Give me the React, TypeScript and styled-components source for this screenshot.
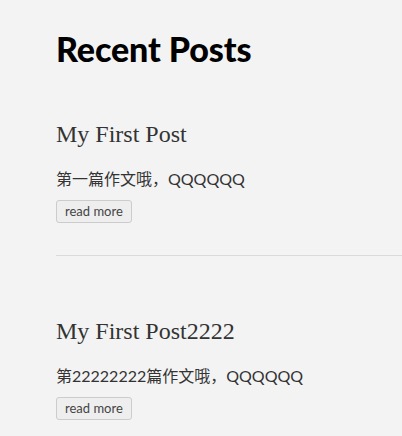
import React from "react";
import styled, { createGlobalStyle } from "styled-components";

const Global = createGlobalStyle`
  html, body { margin: 0; padding: 0; background: #f3f3f3; }
  body { font-family: Lato, "Noto Sans CJK SC", sans-serif; color: #222; }
`;

const Page = styled.main`
  padding: 26px 0 0 56px;
`;

const Heading = styled.h1`
  margin: 0 0 46px;
  font-family: Lato, sans-serif;
  font-weight: 900;
  font-size: 34px;
  line-height: 46px;
  color: #000;
  letter-spacing: -0.1px;
`;

const Post = styled.article<{ $last?: boolean }>`
  padding-bottom: ${(p) => (p.$last ? "0" : "32px")};
  border-bottom: ${(p) => (p.$last ? "none" : "1px solid #dadada")};
  margin-bottom: ${(p) => (p.$last ? "0" : "59px")};
`;

const Title = styled.h2`
  margin: 0 0 18px;
  font-family: "Liberation Serif", serif;
  font-weight: 400;
  font-size: 24px;
  line-height: 32px;
  color: #333;
`;

const Excerpt = styled.p`
  margin: 0 0 10px;
  font-family: Lato, "Noto Sans CJK SC", sans-serif;
  font-size: 16px;
  line-height: 22px;
  color: #333;
`;

const ReadMore = styled.button`
  display: block;
  font-family: Lato, sans-serif;
  font-size: 13px;
  line-height: 15px;
  padding: 3px 8px;
  color: #444;
  background: #eeeeee;
  border: 1px solid #cccccc;
  border-radius: 3px;
`;

const posts = [
  { title: "My First Post", excerpt: "第一篇作文哦，QQQQQQ" },
  { title: "My First Post2222", excerpt: "第22222222篇作文哦，QQQQQQ" },
];

export default function App() {
  return (
    <>
      <Global />
      <Page>
        <Heading>Recent Posts</Heading>
        {posts.map((p, i) => (
          <Post key={p.title} $last={i === posts.length - 1}>
            <Title>{p.title}</Title>
            <Excerpt>{p.excerpt}</Excerpt>
            <ReadMore>read more</ReadMore>
          </Post>
        ))}
      </Page>
    </>
  );
}
